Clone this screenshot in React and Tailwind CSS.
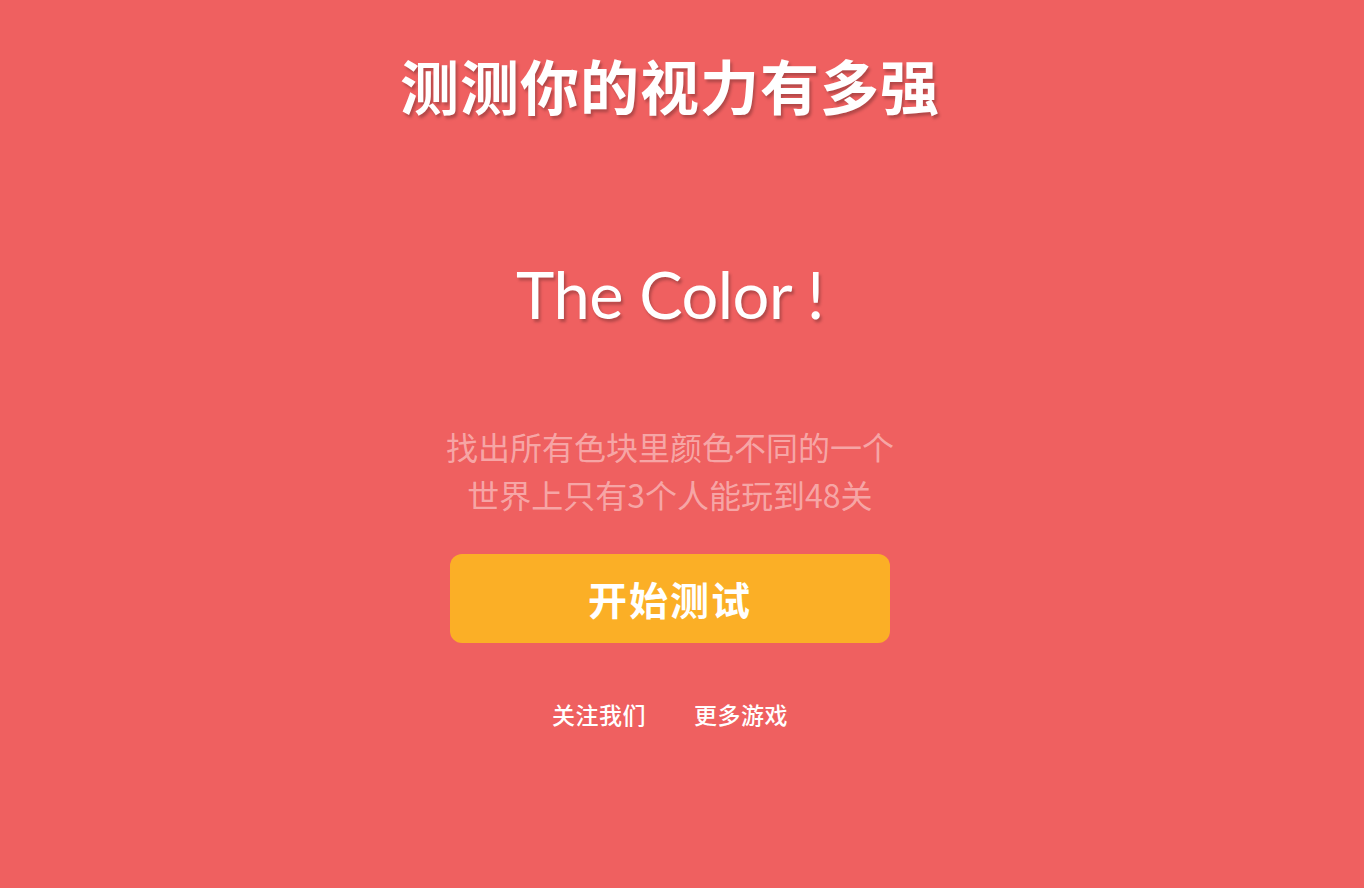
import React from 'react';

export default function App() {
  return (
    <div className="min-h-[888px] w-full bg-[#ef6060] font-['Noto_Sans_CJK_SC',sans-serif]">
      <div className="w-[1340px] flex flex-col items-center">
        {/* Title */}
        <h1 className="pt-[50px] text-[59px] leading-[70px] font-bold text-white tracking-[1px] [text-shadow:2px_3px_3px_rgba(0,0,0,0.25)]">
          测测你的视力有多强
        </h1>

        {/* Logo text */}
        <div className="mt-[134px] text-[65px] leading-[80px] text-white font-['Lato',sans-serif] font-normal tracking-[-0.5px] [text-shadow:2px_3px_3px_rgba(0,0,0,0.25)]">
          The Color !
        </div>

        {/* Description */}
        <div className="mt-[88px] text-[32px] leading-[48px] text-center text-white/45">
          <p>找出所有色块里颜色不同的一个</p>
          <p>世界上只有3个人能玩到48关</p>
        </div>

        {/* Start button */}
        <button className="mt-[36px] w-[440px] h-[89px] rounded-[12px] bg-[#fbaf26] text-white text-[39px] font-bold tracking-[2px]">
          开始测试
        </button>

        {/* Links */}
        <div className="mt-[55px] flex gap-[48px] text-[23px] leading-[32px] text-white font-medium tracking-[0.5px]">
          <a className="cursor-pointer">关注我们</a>
          <a className="cursor-pointer">更多游戏</a>
        </div>
      </div>
    </div>
  );
}
